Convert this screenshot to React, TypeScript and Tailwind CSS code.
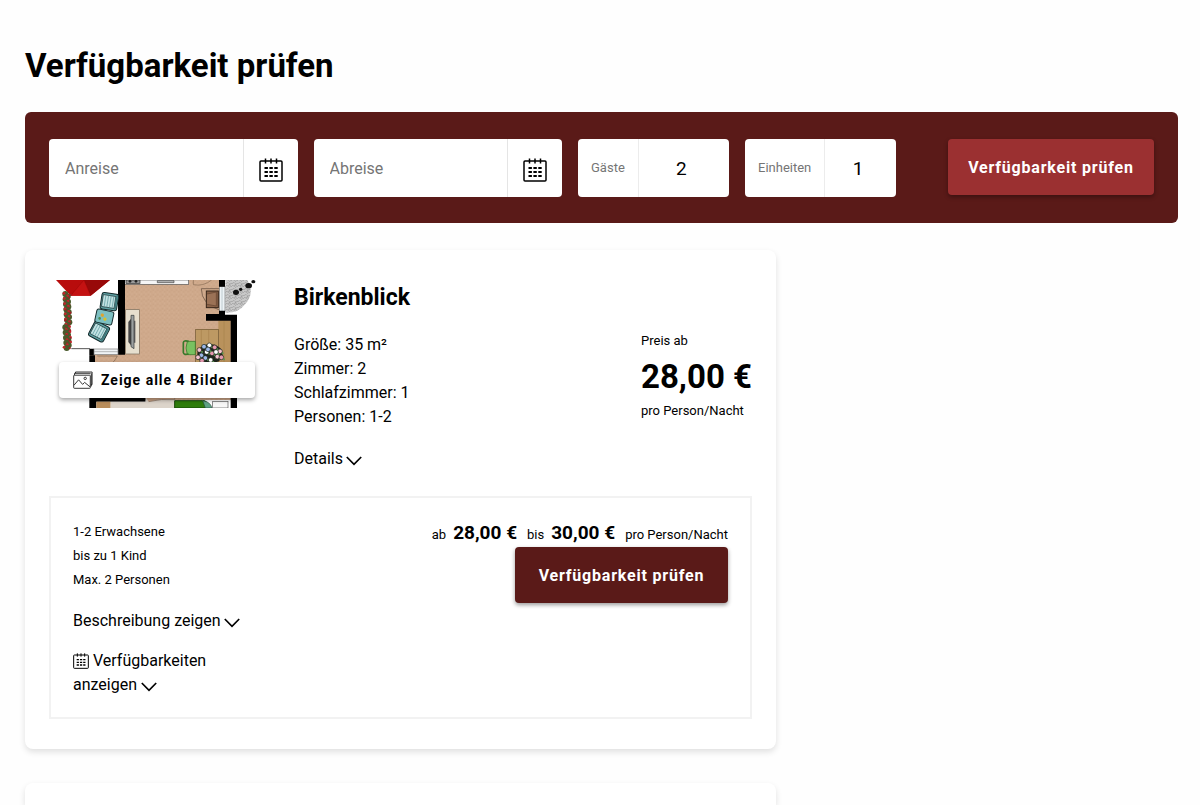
import { useState } from "react";

function CalendarIcon({ className }: { className: string }) {
  return (
    <svg viewBox="0 0 24 24" fill="none" stroke="currentColor" className={className} aria-hidden="true">
      <rect x="1" y="3" width="22" height="20" rx="1" strokeWidth="1.5" />
      <path d="M6.5 0.5v5M12 0.5v5M17.5 0.5v5" strokeWidth="1.5" />
      <path
        d="M5.5 10h3.4M10.4 10h3.4M15.3 10h3.4M5.5 14h3.4M10.4 14h3.4M15.3 14h3.4M5.5 18h3.4M10.4 18h3.4M15.3 18h3.4"
        strokeWidth="2"
      />
    </svg>
  );
}

function Chevron() {
  return (
    <svg viewBox="0 0 16 10" fill="none" stroke="currentColor" strokeWidth="1.7" className="mt-[3px] inline-block h-[10px] w-4" aria-hidden="true">
      <path d="M0.8 1 8 8.4 15.2 1" />
    </svg>
  );
}

function PicturesIcon() {
  return (
    <svg viewBox="0 0 20 18" fill="none" stroke="#222" strokeWidth="0.9" className="h-[18px] w-5 shrink-0" aria-hidden="true">
      <path d="M1.5 4.2V2.3h16M2.5 2.3V1h16.6v12.6h-1.2M17.7 15.2h.6V2.3" />
      <rect x="0.7" y="4.2" width="16.6" height="13.1" rx="0.6" />
      <path d="M1 14.2l4.6-5.4 4 4.6 2-2 5.4 4.4" />
      <circle cx="12.2" cy="7.4" r="1.2" />
    </svg>
  );
}

const flowers = [
  [478, 240], [492, 230], [508, 226], [524, 232], [540, 244], [484, 256], [500, 246], [516, 250],
  [532, 260], [496, 264], [512, 270], [544, 262], [474, 262], [504, 238], [528, 246], [486, 272],
];
const petals = ["#f3c3cf", "#9db8e8", "#ffffff", "#e79ab0"];
const hedge = Array.from({ length: 22 }, (_, i) => i);

function Chair({ transform }: { transform: string }) {
  return (
    <g transform={transform}>
      <rect x="-26" y="-25" width="50" height="50" rx="7" fill="#5fa3a6" stroke="#12282a" strokeWidth="3" />
      <rect x="-22" y="-18" width="38" height="36" fill="#c3e3e4" stroke="#12282a" strokeWidth="2" />
      <path d="M-14-17v34M-6-17v34M2-17v34M10-17v34" stroke="#5b989c" strokeWidth="2" />
      <path d="M19-21v42" stroke="#3f787b" strokeWidth="5" />
    </g>
  );
}

function FloorPlan() {
  return (
    <svg viewBox="48 30 600 384" className="block h-auto w-full" role="img" aria-label="Grundriss Birkenblick">
      <defs>
        <pattern id="carpet" width="14" height="14" patternUnits="userSpaceOnUse">
          <rect width="14" height="14" fill="#cfa98b" />
          <path d="M2 3h3v3h-3zM9 8h3v3h-3z" fill="#c8a183" />
          <path d="M8 1h3v3h-3zM3 9h3v3h-3z" fill="#d5b094" />
        </pattern>
        <pattern id="gravel" width="18" height="18" patternUnits="userSpaceOnUse">
          <rect width="18" height="18" fill="#c9c9c9" />
          <path d="M0 5l6-4 5 5-4 6-7-2M11 6l7-2M7 12l5 6M12 12l6 2M11 6l1 6" stroke="#8b8b8b" fill="none" strokeWidth="1.5" />
        </pattern>
      </defs>
      <rect x="48" y="30" width="600" height="384" fill="#fff" />
      <path d="M250 30H540V140H590V390H150V250H250Z" fill="url(#carpet)" />

      <rect x="254" y="30" width="192" height="13" fill="#f5f5f5" stroke="#555" strokeWidth="2" />
      <rect x="258" y="30" width="42" height="10" fill="#999" stroke="#222" strokeWidth="2" />
      <circle cx="270" cy="34" r="4" fill="#222" />
      <circle cx="288" cy="34" r="4" fill="#222" />
      <path d="M352 32h50v6h-50z" fill="#bbb" stroke="#444" strokeWidth="2" />
      <path d="M460 44q30 6 55-14M460 30v14" fill="none" stroke="#8a6c55" strokeWidth="2" />

      <path d="M556 30h66q24 42-8 74-20 26-58 24z" fill="url(#gravel)" />
      <g fill="#111">
        <ellipse cx="588" cy="67" rx="9" ry="8" />
        <ellipse cx="602" cy="58" rx="5" ry="5" />
        <ellipse cx="626" cy="47" rx="10" ry="8" />
        <ellipse cx="640" cy="35" rx="6" ry="5" />
      </g>

      <path d="M484 56h54M484 56q0 46 54 64" fill="none" stroke="#5b4636" strokeWidth="2" />
      <rect x="499" y="63" width="36" height="50" fill="#8a6248" stroke="#352419" strokeWidth="3" />
      <path d="M501 72l28-6v42l-28-5" fill="#9b7256" stroke="#60432f" strokeWidth="2" />
      <rect x="538" y="50" width="17" height="74" fill="#edf3f6" stroke="#777" strokeWidth="2" />
      <path d="M546 50v74" stroke="#a8b5bb" strokeWidth="2" />

      <rect x="535" y="152" width="36" height="128" fill="#b9925c" />
      <rect x="467" y="178" width="68" height="100" fill="#bd9963" stroke="#6d542f" strokeWidth="2" />
      <path d="M484 180v96M506 180v96M552 154v124" stroke="#a8824d" strokeWidth="2" />

      <path d="M234 30h21v224h-21zM148 236h14v20h-14zM537 30h18v20h-18zM537 122h18v12h36v280h-19V152H498V132h39z" fill="#000" />
      <path d="M148 256h17v25h-17zM148 380h169v15H169v19h-21z" fill="#000" />
      <rect x="162" y="237" width="72" height="17" fill="#f0f3f5" stroke="#777" strokeWidth="2" />
      <path d="M162 245h72" stroke="#999" strokeWidth="2" />
      <path d="M172 258h60q-8 18-20 24" fill="none" stroke="#806650" strokeWidth="2" />
      <path d="M94 236h56" stroke="#555" strokeWidth="3" />

      <rect x="257" y="119" width="41" height="133" fill="#e6dfce" stroke="#756a58" strokeWidth="2" />
      <path d="M265 156l8-10v80l-8-10z" fill="#444" />
      <path d="M273 136h9v100l-9-6z" fill="#9ba0a0" stroke="#303636" strokeWidth="2" />
      <path d="M282 152h4v66h-4z" fill="#555" />

      <path d="M442 214h24v40h-24q-8-20 0-40z" fill="#78c160" stroke="#2d6b20" strokeWidth="2" />
      <path d="M446 214q-15-4-16 4v30q2 8 16 4" fill="none" stroke="#37792a" strokeWidth="5" />
      <ellipse cx="510" cy="252" rx="38" ry="30" fill="#20261d" />
      {flowers.map(([x, y], i) => (
        <g key={i}>
          <circle cx={x} cy={y} r="7" fill={petals[i % 4]} stroke="#1b241a" strokeWidth="2" />
          <circle cx={x + 8} cy={y + 6} r="3" fill="#5a9650" />
        </g>
      ))}

      <path d="M48 30H210L152 77H92Z" fill="#b80c0c" />
      <path d="M132 30h78l-58 47z" fill="#980909" />
      <path d="M92 77L132 30 152 77" fill="#c41212" stroke="#8a0606" strokeWidth="1" />
      {hedge.map((i) => (
        <g key={i}>
          <circle cx={76 + ((i * 7) % 13)} cy={72 + i * 7.7} r="9" fill="#4a5a2c" />
          <circle cx={72 + ((i * 11) % 21)} cy={70 + i * 7.7} r="4" fill="#c4242c" />
          <circle cx={92 - ((i * 5) % 17)} cy={75 + i * 7.6} r="3.5" fill="#a01f25" />
        </g>
      ))}
      <Chair transform="translate(209 95) rotate(9)" />
      <Chair transform="translate(178 185) rotate(28)" />
      <g transform="rotate(12 193 141)">
        <rect x="167" y="121" width="52" height="40" rx="6" fill="#7dbfc1" stroke="#12282a" strokeWidth="3" />
        <circle cx="186" cy="137" r="5" fill="#e0a42c" />
        <circle cx="196" cy="147" r="5" fill="#d7c02d" />
        <circle cx="180" cy="148" r="4" fill="#4b8c56" />
      </g>

      <rect x="169" y="395" width="43" height="19" fill="#b88d5c" />
      <path d="M212 395h105v-14h87v33H212z" fill="#dcd4ca" />
      <path d="M317 381h87v8q-40-4-78 6" fill="#cca486" stroke="#8a7360" strokeWidth="2" />
      <path d="M404 392h84q14-2 18 22H404z" fill="#2f7d0c" stroke="#174706" strokeWidth="3" />
      <path d="M488 392q22 2 28 22h-20z" fill="#5fa284" stroke="#234c3a" strokeWidth="2" />
      <rect x="518" y="394" width="46" height="20" fill="#f7f7f7" stroke="#555" strokeWidth="2" />
    </svg>
  );
}

function DateField({ id, label }: { id: string; label: string }) {
  return (
    <div className="flex h-[58px] min-w-0 flex-1 overflow-hidden rounded bg-white">
      <input
        id={id}
        type="text"
        aria-label={label}
        placeholder={label}
        className="min-w-0 flex-1 pt-0.5 pl-4 text-base text-black outline-none placeholder:text-[#757575]"
      />
      <button type="button" aria-label={`${label} wählen`} className="flex w-[55px] items-center justify-center border-l border-[#e5e5e5] pt-1">
        <CalendarIcon className="size-6" />
      </button>
    </div>
  );
}

function CountField({ id, label, initial }: { id: string; label: string; initial: string }) {
  const [value, setValue] = useState(initial);
  return (
    <div className="flex h-[58px] w-[151px] overflow-hidden rounded bg-white">
      <label htmlFor={id} className="flex items-center border-r border-[#ececec] px-[13px] text-[13px] text-[#757575]">
        {label}
      </label>
      <input
        id={id}
        type="text"
        inputMode="numeric"
        value={value}
        onChange={(e) => setValue(e.target.value)}
        className="min-w-0 flex-1 pt-0.5 pr-[5px] text-center text-[19px] text-black outline-none"
      />
    </div>
  );
}

export default function App() {
  return (
    <main className="min-h-screen bg-[#fefefe] pt-11 pr-[22px] pl-[25px] font-['Roboto',sans-serif] text-base text-black">
      <h1 className="text-[33px] leading-[44px] font-bold">Verfügbarkeit prüfen</h1>

      <form className="mt-6 flex items-start gap-4 rounded-md bg-[#5a1a18] px-6 pt-[27px] pb-[26px]" onSubmit={(e) => e.preventDefault()}>
        <DateField id="arrival" label="Anreise" />
        <DateField id="departure" label="Abreise" />
        <CountField id="guests" label="Gäste" initial="2" />
        <CountField id="units" label="Einheiten" initial="1" />
        <button type="submit" className="ml-9 h-14 w-[206px] shrink-0 rounded bg-[#9b3031] pt-0.5 font-bold tracking-wider text-white shadow-[0_2px_4px_rgba(0,0,0,0.35)]">
          Verfügbarkeit prüfen
        </button>
      </form>

      <div className="mt-[27px] grid grid-cols-[minmax(0,1fr)_378px] gap-6">
        <div className="flex flex-col gap-[34px]">
          <article className="rounded-lg bg-white px-6 pt-[30px] pb-[30px] shadow-[0_3px_6px_rgba(0,0,0,0.12)]">
            <div className="flex gap-[31px]">
              <div className="flex w-[214px] shrink-0 items-start justify-center">
                <div className="relative w-[200px]">
                  <FloorPlan />
                  <button type="button" className="absolute bottom-[10px] left-[3px] flex h-9 w-[196px] items-center gap-2 rounded bg-white pl-[14px] text-sm font-bold tracking-[1px] whitespace-nowrap shadow-[0_2px_4px_rgba(0,0,0,0.35)]">
                    <PicturesIcon />
                    Zeige alle 4 Bilder
                  </button>
                </div>
              </div>
              <div className="flex-1">
                <h2 className="text-[23px] leading-9 font-bold">Birkenblick</h2>
                <ul className="mt-[17px] leading-6">
                  <li>Größe: 35 m²</li>
                  <li>Zimmer: 2</li>
                  <li>Schlafzimmer: 1</li>
                  <li>Personen: 1-2</li>
                </ul>
                <button type="button" className="mt-[18px] flex items-center gap-[3px] leading-6">
                  Details <Chevron />
                </button>
              </div>
              <div className="pt-[49px]">
                <p className="text-[13px] leading-6">Preis ab</p>
                <p className="text-[33px] leading-[48px] font-bold whitespace-nowrap">28,00 €</p>
                <p className="text-[13px] leading-5">pro Person/Nacht</p>
              </div>
            </div>

            <section className="mt-[25px] flex justify-between border-2 border-[#f2f2f2] px-[22px] pt-[22px] pb-5">
              <div className="w-[180px]">
                <ul className="text-[13px] leading-6">
                  <li>1-2 Erwachsene</li>
                  <li>bis zu 1 Kind</li>
                  <li>Max. 2 Personen</li>
                </ul>
                <button type="button" className="mt-[17px] flex items-center gap-[3px] leading-6 whitespace-nowrap">
                  Beschreibung zeigen <Chevron />
                </button>
                <button type="button" className="mt-4 block text-left leading-6">
                  <CalendarIcon className="-mt-px inline-block size-4" /> Verfügbarkeiten anzeigen <Chevron />
                </button>
              </div>
              <div className="flex flex-col items-end">
                <p className="flex items-baseline gap-[10px] text-[13px] leading-[25px]">
                  <span className="flex items-baseline gap-[7px]">
                    ab <strong className="text-[19px]">28,00 €</strong>
                  </span>
                  <span className="flex items-baseline gap-[7px]">
                    bis <strong className="text-[19px]">30,00 €</strong>
                  </span>
                  <span>pro Person/Nacht</span>
                </p>
                <button type="button" className="h-14 w-[213px] rounded bg-[#5a1a18] pt-0.5 font-bold tracking-wider text-white shadow-[0_2px_4px_rgba(0,0,0,0.4)]">
                  Verfügbarkeit prüfen
                </button>
              </div>
            </section>
          </article>
          <article className="h-[22px] rounded-t-lg bg-white shadow-[0_3px_6px_rgba(0,0,0,0.12)]" />
        </div>
      </div>
    </main>
  );
}
